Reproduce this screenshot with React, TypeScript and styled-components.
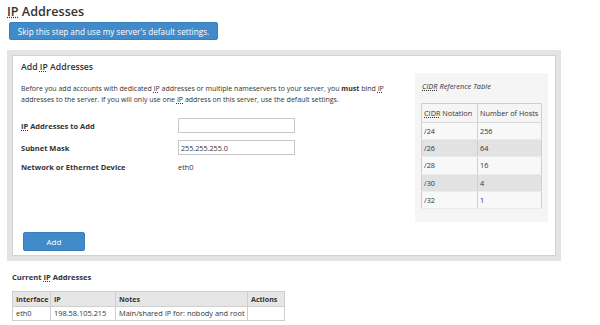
import React from 'react'
import styled, { createGlobalStyle } from 'styled-components'

const Global = createGlobalStyle`
  body {
    margin: 0;
    background: #fff;
    font-family: "Open Sans", "Liberation Sans", sans-serif;
    color: #333;
  }
`

const S = {
  Page: styled.div`
    padding: 4px 0 0 7px;
    width: 554px;
  `,

  Title: styled.h1`
    margin: 0;
    font-size: 12.6px;
    line-height: 16px;
    font-weight: 600;
    color: #333;
  `,

  SkipButton: styled.button`
    display: block;
    margin: 2px 0 0 2px;
    height: 18px;
    width: 209px;
    padding: 0;
    border: 1px solid #3a7fbd;
    border-radius: 2px;
    background: #428bca;
    color: #fff;
    font-family: inherit;
    font-size: 8.2px;
    text-align: center;
  `,

  Panel: styled.div`
    margin-top: 10px;
    border: 5px solid #e4e4e4;
    box-shadow: inset 0 0 0 1px #d2d2d2;
    padding: 6px 8px 5px 9px;
  `,

  Row: styled.div`
    display: flex;
    align-items: flex-start;
    gap: 14px;
  `,

  FormCol: styled.div`
    flex: 1;
  `,

  Heading: styled.h2`
    margin: 0;
    font-size: 8.7px;
    line-height: 12px;
    font-weight: 600;
  `,

  Intro: styled.p`
    margin: 11px 0 0;
    font-size: 7px;
    line-height: 10.5px;
  `,

  Fields: styled.div`
    margin-top: 13px;
    display: grid;
    grid-template-columns: 157px 117px;
    row-gap: 7px;
    align-items: center;
  `,

  Label: styled.div`
    font-size: 7.5px;
    font-weight: 700;
    line-height: 10px;
  `,

  Value: styled.div`
    font-size: 7.4px;
    line-height: 10px;
  `,

  Input: styled.input`
    box-sizing: border-box;
    width: 117px;
    height: 15px;
    margin: 0;
    padding: 0 2px;
    border: 1px solid #c8c8c8;
    background: #fff;
    font-family: inherit;
    font-size: 7.2px;
    color: #333;
    outline: none;
  `,

  CidrBox: styled.div`
    margin-top: 12px;
    width: 133px;
    box-sizing: border-box;
    background: #f5f5f5;
    padding: 8px 6px 13px;
  `,

  CidrTitle: styled.div`
    padding-left: 1px;
    font-size: 7.4px;
    line-height: 10px;
    font-style: italic;
    margin-bottom: 12px;
  `,

  CidrTable: styled.table`
    width: 121px;
    border-collapse: collapse;
    font-size: 7.3px;
    th, td {
      border-left: 1px solid #cfcfcf;
      border-right: 1px solid #cfcfcf;
      padding: 0 2px;
      text-align: left;
      font-weight: 400;
      white-space: nowrap;
    }
    th {
      height: 18px;
      background: #f5f5f5;
      border-top: 1px solid #cfcfcf;
      border-bottom: 1px solid #d8d8d8;
    }
    td {
      height: 16.2px;
      border-bottom: 1px solid #ebebeb;
    }
    th:first-child, td:first-child {
      width: 51px;
    }
  `,

  CidrRow: styled.tr<{ $shade: boolean }>`
    background: ${p => (p.$shade ? '#e2e2e2' : '#f8f8f8')};
  `,

  AddButton: styled.button`
    display: block;
    margin: 10px 0 0 2px;
    width: 62px;
    height: 19px;
    padding: 0;
    border: 1px solid #3a7fbd;
    border-radius: 2px;
    background: #428bca;
    color: #fff;
    font-family: inherit;
    font-size: 8px;
  `,

  Current: styled.div`
    margin-top: 11px;
    padding-left: 5px;
  `,

  CurrentTitle: styled.h3`
    margin: 0;
    font-size: 7.6px;
    line-height: 10px;
    font-weight: 700;
  `,

  IpTable: styled.table`
    margin-top: 9px;
    width: 272px;
    table-layout: fixed;
    border-collapse: collapse;
    font-size: 7.4px;
    th, td {
      border: 1px solid #cfcfcf;
      padding: 0 2px 0 3px;
      text-align: left;
      white-space: nowrap;
      overflow: visible;
    }
    th {
      height: 14px;
      background: #e6e6e6;
      font-size: 7.1px;
      font-weight: 700;
    }
    td {
      height: 13px;
      background: #fff;
    }
  `,

  IpCol: styled.col<{ $w: number }>`
    width: ${p => p.$w}px;
  `,

  Abbr: styled.abbr`
    text-decoration: underline dotted;
    text-underline-offset: 1px;
    cursor: help;
  `,
}

const cidr = [
  ['/24', '256'],
  ['/26', '64'],
  ['/28', '16'],
  ['/30', '4'],
  ['/32', '1'],
]

const IP = () => <S.Abbr title="Internet Protocol">IP</S.Abbr>

const App: React.FC = () => {
  return (
    <S.Page>
      <Global />
      <S.Title>
        <IP /> Addresses
      </S.Title>
      <S.SkipButton>Skip this step and use my server's default settings.</S.SkipButton>

      <S.Panel>
        <S.Row>
          <S.FormCol>
            <S.Heading>
              Add <IP /> Addresses
            </S.Heading>
            <S.Intro>
              Before you add accounts with dedicated <IP /> addresses or multiple nameservers to your
              server, you <b>must</b> bind <IP /> addresses to the server. If you will only use one <IP />{' '}
              address on this server, use the default settings.
            </S.Intro>
            <S.Fields>
              <S.Label>
                <IP /> Addresses to Add
              </S.Label>
              <S.Input />
              <S.Label>Subnet Mask</S.Label>
              <S.Input defaultValue="255.255.255.0" />
              <S.Label>Network or Ethernet Device</S.Label>
              <S.Value>eth0</S.Value>
            </S.Fields>
          </S.FormCol>

          <S.CidrBox>
            <S.CidrTitle>
              <S.Abbr title="Classless Inter-Domain Routing">CIDR</S.Abbr> Reference Table
            </S.CidrTitle>
            <S.CidrTable>
              <thead>
                <tr>
                  <th>
                    <S.Abbr title="Classless Inter-Domain Routing">CIDR</S.Abbr> Notation
                  </th>
                  <th>Number of Hosts</th>
                </tr>
              </thead>
              <tbody>
                {cidr.map(([n, h], i) => (
                  <S.CidrRow key={n} $shade={i % 2 === 1}>
                    <td>{n}</td>
                    <td>{h}</td>
                  </S.CidrRow>
                ))}
              </tbody>
            </S.CidrTable>
          </S.CidrBox>
        </S.Row>
        <S.AddButton>Add</S.AddButton>
      </S.Panel>

      <S.Current>
        <S.CurrentTitle>
          Current <IP /> Addresses
        </S.CurrentTitle>
        <S.IpTable>
          <colgroup>
            <S.IpCol $w={38} />
            <S.IpCol $w={65} />
            <S.IpCol $w={132} />
            <S.IpCol $w={37} />
          </colgroup>
          <thead>
            <tr>
              <th>Interface</th>
              <th>IP</th>
              <th>Notes</th>
              <th>Actions</th>
            </tr>
          </thead>
          <tbody>
            <tr>
              <td>eth0</td>
              <td>198.58.105.215</td>
              <td>Main/shared IP for: nobody and root</td>
              <td></td>
            </tr>
          </tbody>
        </S.IpTable>
      </S.Current>
    </S.Page>
  )
}

export default App
